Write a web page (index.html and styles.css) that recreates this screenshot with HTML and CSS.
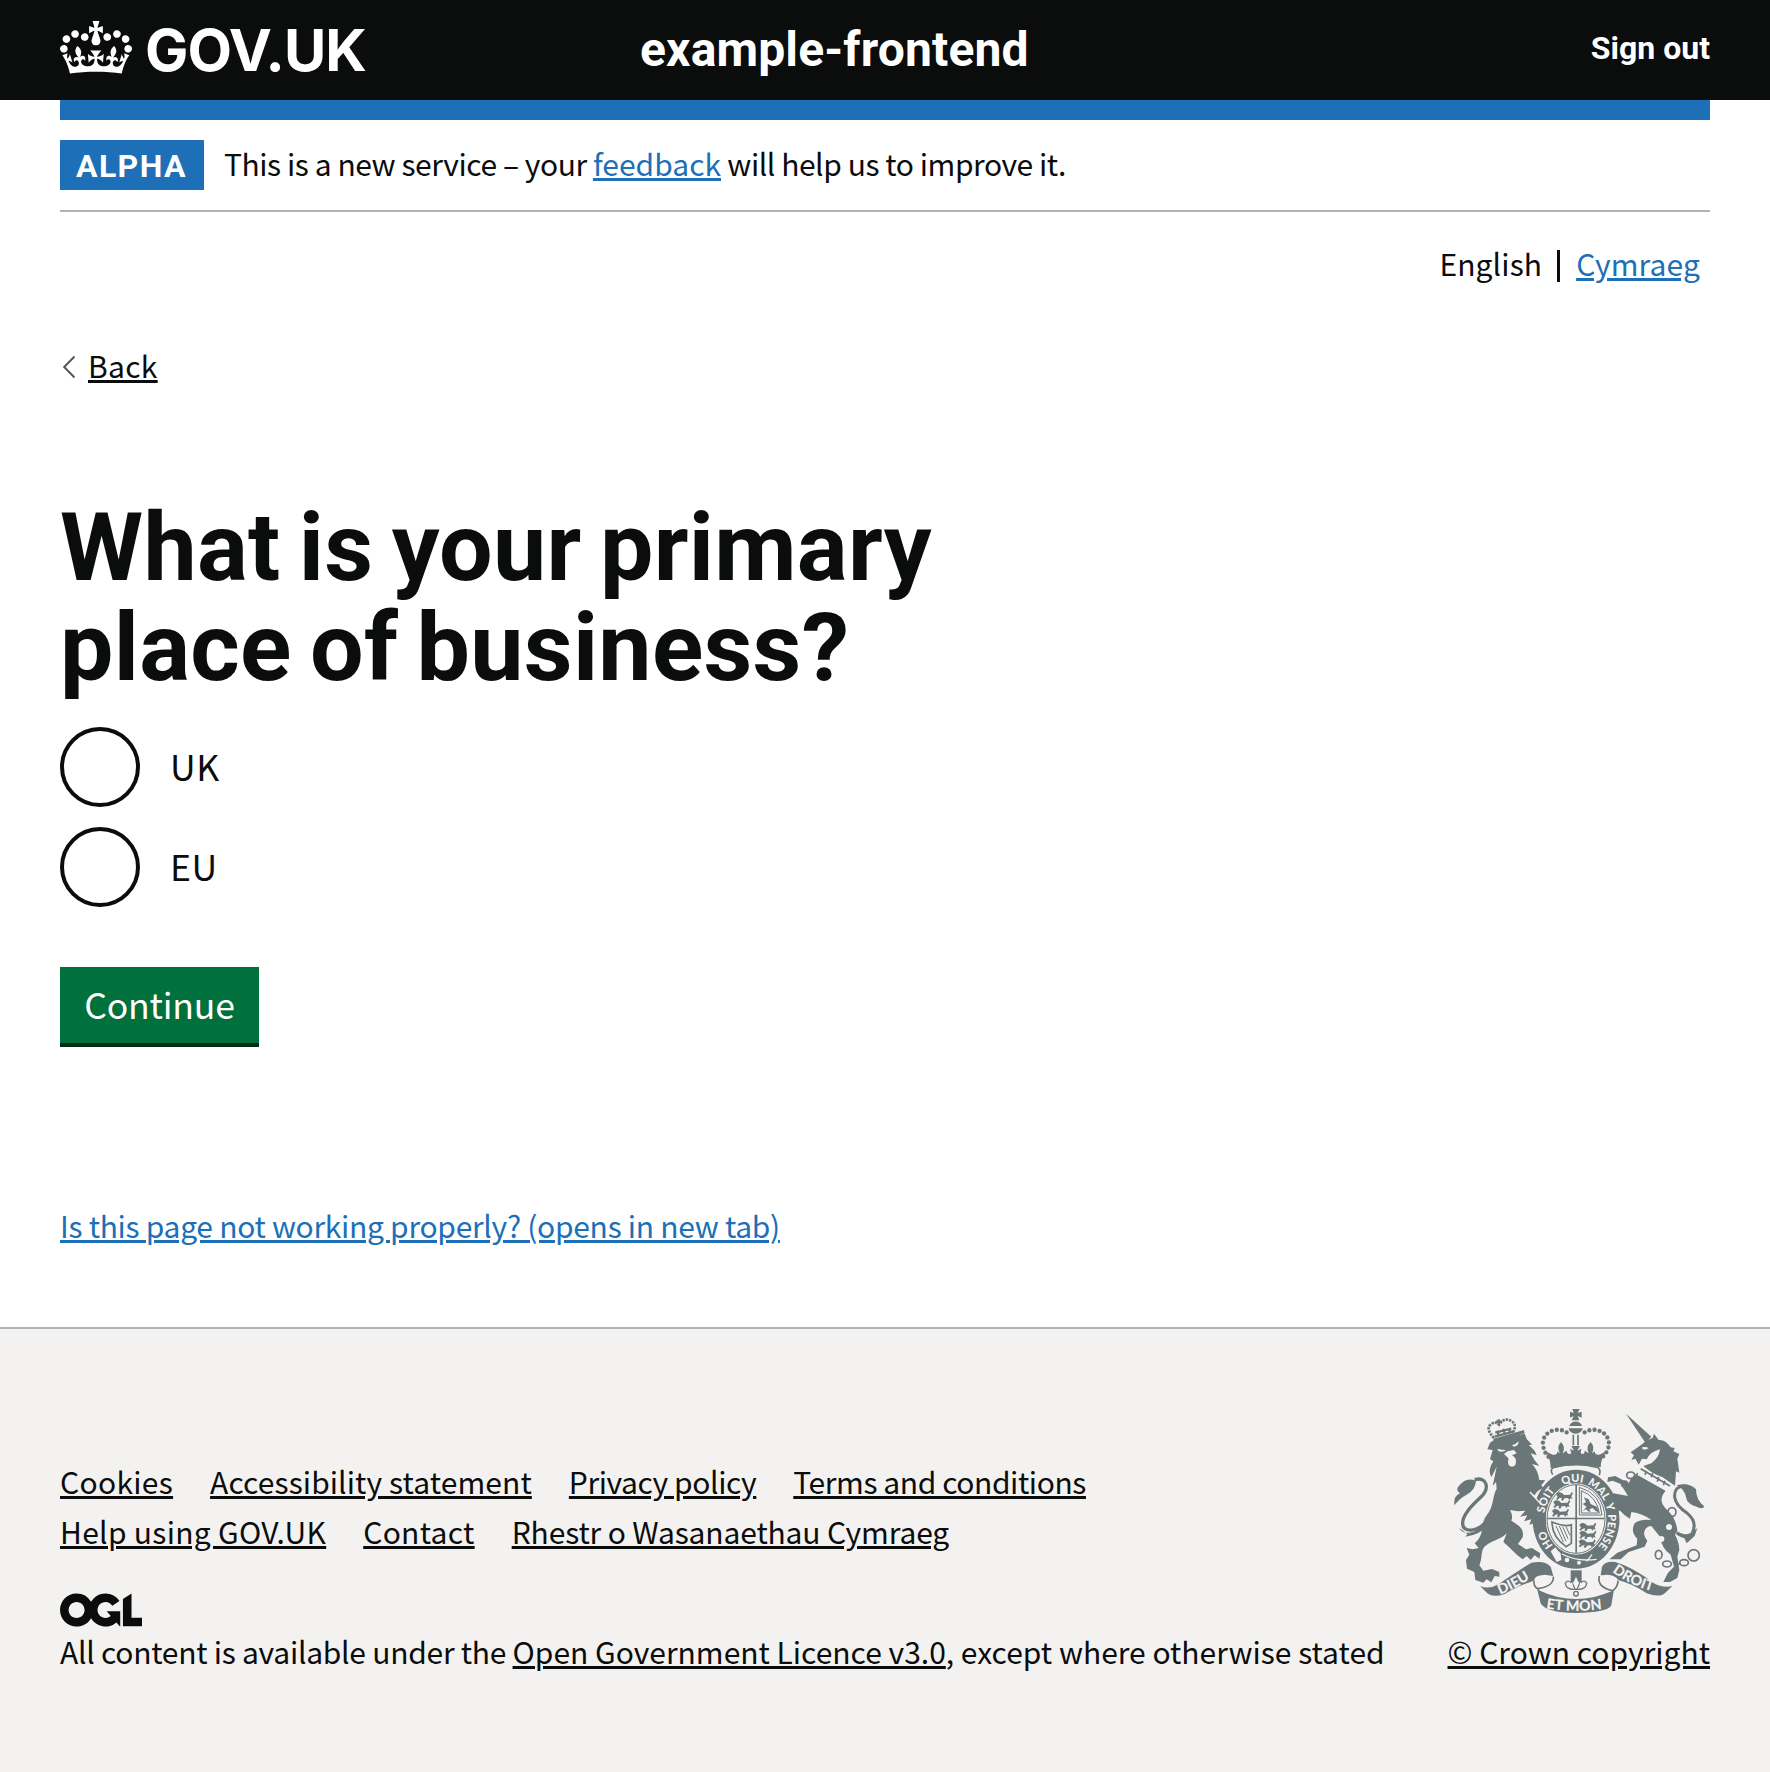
FILE: index.html
```html
<!DOCTYPE html>
<html lang="en">
<head>
<meta charset="utf-8">
<title>What is your primary place of business? - example-frontend - GOV.UK</title>
<link rel="stylesheet" href="styles.css">
</head>
<body>
<header class="header">
  <div class="header-inner">
    <div class="logo">
      <svg class="crown" viewBox="0 0 132 97" aria-hidden="true"><path fill="currentColor" fill-rule="evenodd" d="M25 30.2c3.5 1.5 7.7-.2 9.1-3.7 1.5-3.6-.2-7.8-3.9-9.2-3.6-1.4-7.6.3-9.1 3.9-1.4 3.5.3 7.5 3.9 9zM9 39.5c3.6 1.5 7.8-.2 9.2-3.7 1.5-3.6-.2-7.8-3.9-9.1-3.6-1.5-7.6.2-9.1 3.8-1.4 3.5.3 7.5 3.8 9zM4.4 57.2c3.5 1.5 7.7-.2 9.1-3.8 1.5-3.6-.2-7.7-3.9-9.1-3.5-1.5-7.6.3-9.1 3.8-1.4 3.5.3 7.6 3.9 9.1zm38.3-21.4c3.5 1.5 7.7-.2 9.1-3.8 1.5-3.6-.2-7.7-3.9-9.1-3.6-1.5-7.6.3-9.1 3.8-1.3 3.6.4 7.7 3.9 9.1zm64.4-5.6c-3.6 1.5-7.8-.2-9.1-3.7-1.5-3.6.2-7.8 3.8-9.2 3.6-1.4 7.7.3 9.2 3.9 1.3 3.5-.4 7.5-3.9 9zm15.9 9.3c-3.6 1.5-7.7-.2-9.1-3.7-1.5-3.6.2-7.8 3.7-9.1 3.6-1.5 7.7.2 9.2 3.8 1.5 3.5-.3 7.5-3.8 9zm4.7 17.7c-3.6 1.5-7.8-.2-9.2-3.8-1.5-3.6.2-7.7 3.9-9.1 3.6-1.5 7.7.3 9.2 3.8 1.3 3.5-.4 7.6-3.9 9.1zM89.3 35.8c-3.6 1.5-7.8-.2-9.2-3.8-1.4-3.6.2-7.7 3.9-9.1 3.6-1.5 7.7.3 9.2 3.8 1.4 3.6-.3 7.7-3.9 9.1zM69.7 17.7l8.9 4.7V9.3l-8.9 2.8c-.2-.3-.5-.6-.9-.9L72.4 0H59.6l3.5 11.2c-.3.3-.6.5-.9.9l-8.8-2.8v13.1l8.8-4.7c.3.3.6.7.9.9l-5 15.4v.1c-.2.8-.4 1.6-.4 2.4 0 4.1 3.1 7.5 7 8.1h.2c.3 0 .7.1 1 .1.4 0 .7 0 1-.1h.2c4-.6 7.1-4.1 7.1-8.1 0-.8-.1-1.7-.4-2.4V34l-5.1-15.4c.4-.2.7-.6 1-.9zM66 92.8c16.9 0 32.8 1.1 47.1 3.2 4-16.9 8.9-26.7 14-33.5l-9.6-3.4c1 4.9 1.1 7.2 0 10.2-1.5-1.4-3-4.3-4.2-8.7L108.6 76c2.8-2 5-3.2 7.5-3.3-4.4 9.4-10 11.9-13.6 11.2-4.3-.8-6.3-4.6-5.6-7.9 1-4.7 5.7-5.9 8-.5 4.3-8.7-3-11.4-7.6-8.8 7.1-7.2 7.9-13.5 2.1-21.1-8 6.1-8.1 12.3-4.5 20.8-4.7-5.4-12.1-2.5-9.5 6.2 3.4-5.2 7.9-2 7.2 3.1-.6 4.3-6.4 7.8-13.5 7.2-10.3-.9-10.9-8-11.2-13.8 2.5-.5 7.1 1.8 11 7.3L80.2 60c-4.1 4.4-8 5.3-12.3 5.4 1.4-4.4 8-11.6 8-11.6H55.5s6.4 7.2 7.9 11.6c-4.2-.1-8-1-12.3-5.4l1.4 16.4c3.9-5.5 8.5-7.7 10.9-7.3-.3 5.8-.9 12.8-11.1 13.8-7.2.6-12.9-2.9-13.5-7.2-.7-5 3.8-8.3 7.1-3.1 2.7-8.7-4.6-11.6-9.4-6.2 3.7-8.5 3.6-14.7-4.6-20.8-5.8 7.6-5 13.9 2.2 21.1-4.7-2.6-11.9.1-7.7 8.8 2.3-5.5 7.1-4.2 8.1.5.7 3.3-1.3 7.1-5.7 7.9-3.5.7-9-1.8-13.5-11.2 2.5.1 4.7 1.3 7.5 3.3l-4.7-15.4c-1.2 4.4-2.7 7.2-4.3 8.7-1.1-3-.9-5.3 0-10.2l-9.5 3.4c5 6.9 9.9 16.7 14 33.5 14.8-2.1 30.8-3.2 47.7-3.2z"/></svg>
      <span class="wordmark">GOV.UK</span>
    </div>
    <div class="service">example-frontend</div>
    <div class="signout">Sign out</div>
  </div>
</header>

<div class="container">
  <div class="bar"></div>
  <div class="phase">
    <strong class="tag">ALPHA</strong>
    <span class="phase-text">This is a new service – your <a class="link even" href="#">feedback</a> will help us to improve it.</span>
  </div>
  <nav class="lang"><span class="lang-current">English</span><a class="link" href="#">Cymraeg</a></nav>
  <div class="back">
    <svg class="chevron" viewBox="0 0 14 24" aria-hidden="true"><path d="M12.5 1.5 2.2 12l10.3 10.5" fill="none" stroke="#505a5f" stroke-width="2"/></svg>
    <a class="link dark wide" href="#">Back</a>
  </div>
  <main>
    <h1 class="title">What is your primary<br>place of business?</h1>
    <div class="radios">
      <label class="radio"><span class="dot"></span><span class="radio-text">UK</span></label>
      <label class="radio"><span class="dot"></span><span class="radio-text">EU</span></label>
    </div>
    <button class="button">Continue</button>
    <p class="report"><a class="link" href="#">Is this page not working properly? (opens in new tab)</a></p>
  </main>
</div>

<footer class="footer">
  <div class="footer-inner">
    <div class="meta">
      <div class="links"><a class="link dark wide" href="#">Cookies</a><a class="link dark open" href="#">Accessibility statement</a><a class="link dark tight" href="#">Privacy policy</a><a class="link dark tight" href="#">Terms and conditions</a></div>
      <div class="links"><a class="link dark wide" href="#">Help using GOV.UK</a><a class="link dark wide" href="#">Contact</a><a class="link dark snug" href="#">Rhestr o Wasanaethau Cymraeg</a></div>
      <svg class="ogl" viewBox="0 0 483.2 195.7" aria-hidden="true"><path fill="currentColor" d="M421.5 142.8V.1l-50.7 32.3v161.1h112.4v-50.7zm-122.3-9.6A47.12 47.12 0 0 1 221 97.8c0-26 21.1-47.1 47.1-47.1 16.7 0 31.4 8.7 39.7 21.8l42.7-27.2A97.63 97.63 0 0 0 268.1 0c-36.5 0-68.3 20.1-85.1 49.7A98 98 0 0 0 97.8 0C43.9 0 0 43.9 0 97.8s43.9 97.8 97.8 97.8c36.5 0 68.3-20.1 85.1-49.7a97.76 97.76 0 0 0 149.6 25.4l19.4 22.2h3v-87.8h-80l24.3 27.5zM97.8 145c-26 0-47.1-21.1-47.1-47.1s21.1-47.1 47.1-47.1 47.1 21.1 47.1 47.1S123.8 145 97.8 145"/></svg>
      <p class="licence">All content is available under the <a class="link dark even" href="#">Open Government Licence v3.0</a><span class="even">, except where otherwise stated</span></p>
    </div>
    <div class="copyright">
      <svg class="arms" viewBox="69 54 756 618" aria-hidden="true">
        <defs>
          <path id="garter" d="M438 500A96 112 0 0 1 438 276A96 112 0 0 1 438 500"/>
          <path id="lion-s" d="M0 6l8-6 10 3 6 6 18-1 6-8 3 4-5 9 3 8-6-2-3 5-5-6-10 1-4 7-6-2 3-7-9 2-4 5-5-3 5-6-3-5z"/>
          <path id="dieu" d="M210 614Q262 594 322 552"/>
          <path id="droit" d="M546 546Q606 590 682 608"/>
          <path id="etmon" d="M348 655Q437 670 530 655"/>
        </defs>
        <g class="ink">
          <!-- lion -->
          <path d="M192 150L284 131 290 147 306 164 296 166Q314 178 320 196L302 190Q312 212 328 228L306 222Q324 240 328 270L346 271 334 286 340 294Q322 300 314 316L298 306 334 344 346 374 349 404 340 398 334 416 325 404 314 414 312 400 298 404 304 388 282 394 292 376 270 380 286 362 264 364 240 360Q250 378 244 392C262 404 284 414 278 442L264 462 288 478 306 474 331 490 328 506 314 496 302 510 290 498 278 508 262 496 236 470 220 456 230 430C216 446 190 452 174 462 148 476 160 500 148 526L160 542 186 537 208 546 208 560 194 558 184 577 170 568 160 578 136 570 133 546 111 536 108 510 118 494 110 474 128 478 146 474 134 460C166 434 150 400 170 376 192 350 186 320 200 296L198 276 188 288 200 230 184 262Q172 240 190 214L180 208 188 180 172 178 180 158Z"/>
          <path d="M73 346Q70 318 90 310 72 300 92 282 112 262 138 272 136 300 110 314 92 322 73 346Z"/>
          <path class="line" stroke-width="10" d="M134 269C172 258 180 296 152 322 124 348 96 376 98 402 100 430 142 424 166 398"/>
          <path d="M88 414Q94 430 118 428 142 426 168 396L184 398Q150 436 106 440L112 432Z"/>
          <path d="M190 146L282 120 284 130 192 158Z"/>
          <path class="line" stroke-width="8" stroke-dasharray="7 3" d="M192 144Q166 116 182 104 196 92 207 104 222 82 242 92 262 102 250 126"/>
          <path class="line" stroke-width="7" d="M206 88V104M198 95H216M194 140L252 124M202 122L206 136M220 116L224 132M238 114L240 128M196 128L244 116"/>
          <!-- unicorn -->
          <path d="M588 71L664 140 646 158Z"/>
          <path d="M602 187L634 164 652 150 668 144 672 131 686 150Q706 148 722 172L734 174 730 184 748 192 742 206 748 248 738 244 735 287 698 262Q668 252 640 228L664 220Q688 202 690 178 662 184 650 208L636 206 626 224 616 206 604 210 612 196Z"/>
          <path d="M622 248L706 304Q682 330 708 356 738 382 742 422L735 434Q748 458 748 480L742 500 748 540 742 564 720 576 700 576 714 548 732 530 722 494Q694 474 690 440L664 408Q650 408 644 422 638 434 652 452L644 470 596 486 572 508 538 508 562 488 620 466 622 446Q600 426 614 400 630 386 664 390 638 370 604 366L600 386 584 376 572 364 556 356 546 328 550 310 594 318 572 282 548 272 532 276 534 262 556 258 596 280 604 264Z"/>
          <path d="M740 286Q776 276 798 298 798 330 822 348 822 360 800 350 772 344 768 322 764 298 740 286Z"/>
          <path class="line" stroke-width="9" d="M770 289Q732 284 734 322 738 348 772 370 804 396 786 432 770 450 740 428"/>
          <path d="M740 424Q770 446 802 414L794 438 770 460 764 446Z"/>
          <path class="band" d="M632 236L718 288 706 304 622 256Z"/>
          <path class="line" stroke-width="5" d="M632 236L720 288M622 258L704 304M645 254l4-12M664 262l4-14M682 275l4-14M700 286l5-14"/>
          <g class="line chain">
            <ellipse cx="602" cy="256" rx="12" ry="10"/><ellipse cx="594" cy="341" rx="14" ry="14"/><ellipse cx="584" cy="282" rx="9" ry="9"/><ellipse cx="726" cy="366" rx="12" ry="13"/><ellipse cx="686" cy="494" rx="10" ry="13"/><ellipse cx="711" cy="522" rx="13" ry="9"/><ellipse cx="762" cy="518" rx="13" ry="9"/><circle cx="791" cy="496" r="17"/><path d="M740 524l12-4"/>
          </g>
          <!-- crown -->
          <path d="M427 57h22l-6 12 12-4v18l-12-5 5 13h-23l6-13-11 5v-18l11 4z"/>
          <path d="M418 108a20 20 0 0 1 38 0zM416 115h42a21 16 0 0 1-42 0z"/>
          <path class="line beads" d="M410 127C378 106 330 130 340 170Q344 192 360 204M464 127C496 106 544 130 536 170Q530 192 514 204"/>
          <path class="line" stroke-width="5" d="M430 134v32M444 134v32"/>
          <path d="M346 184L368 194Q384 196 382 184L390 190Q378 172 393 156 408 172 398 190L410 182Q412 196 424 190L420 176 432 182 424 168H450L442 182 454 176 452 190Q464 196 464 182L476 190Q466 172 482 156 496 172 486 190L494 184Q494 196 508 194L530 184Q512 206 512 232 437 218 362 234 362 206 346 184Z"/>
          <path class="line" stroke-width="5" d="M372 232Q437 214 502 232 514 238 508 256M372 232Q358 238 368 254"/>
          <!-- garter -->
          <path fill-rule="evenodd" d="M438 239A130 148 0 0 1 438 536A130 148 0 0 1 438 239ZM438 280A91 107 0 0 0 438 494A91 107 0 0 0 438 280Z"/>
          <ellipse class="line" stroke-width="3" cx="438" cy="387" rx="87" ry="103"/>
          <path d="M436 284h5v204h-5zM352 383h172v5H352z"/>
          <use href="#lion-s" x="378" y="306"/><use href="#lion-s" x="370" y="330"/><use href="#lion-s" x="366" y="356"/>
          <use href="#lion-s" x="448" y="398"/><use href="#lion-s" x="448" y="422"/><use href="#lion-s" x="446" y="448"/>
          <path class="line" stroke-width="3" d="M448 292V375H516Q512 310 448 292ZM454 302V369H508Q500 320 454 302Z"/>
          <path d="M458 364l12-14-12-8 10-6-6-14 14 6 6 14 18 8 8 18-12-6-8-8-10 4 4 8-8-2-6-6z"/>
          <path class="line" stroke-width="5" d="M366 396Q366 440 408 470L424 460V404Q406 412 366 396Z"/>
          <path class="line" stroke-width="3" d="M378 408L400 456M388 408L408 454M398 410L414 446M408 410L420 436"/>
          <!-- ribbon -->
          <path d="M150 588Q178 600 206 582 268 540 304 518 346 510 362 530L370 558 344 554Q312 556 312 572 260 588 224 612 190 624 172 610Z"/>
          <path d="M727 588Q690 596 664 574 604 530 556 516 526 512 516 530L512 556 534 554Q560 558 564 570 610 582 650 610 690 624 706 608Z"/>
          <path d="M330 602Q437 652 548 602L552 598 544 646Q534 668 437 669 346 668 332 640L320 592Z"/>
          <path class="line" stroke-width="5" d="M312 572Q310 588 322 596 372 590 370 560M564 572Q564 590 548 602 500 592 508 558"/>
          <path d="M422 541h33v36h-33z"/>
          <path class="line" stroke-width="4" d="M438 556Q422 578 436 598 408 600 406 580 412 568 424 578M438 556Q456 578 440 598 468 600 470 580 464 568 452 578M422 598H454"/>
          <circle class="line" stroke-width="4" cx="438" cy="611" r="7"/>
        </g>
        <g class="paper">
          <path d="M346 556Q330 566 344 578 356 566 364 562ZM532 556Q548 566 534 578 520 570 514 560Z"/>
          <path d="M202 176q12 4 26 4-8 8-22 4zM246 166q10-2 20-12 0 14-14 16zM222 192l10-8 20-4 8 10-14 6q12 6 12 18 0 16-12 16t-12-16q4-8-2-12z"/>
          <path d="M636 172q12-2 20 2-8 6-18 4z"/>
          <path d="M362 484l14-12 8 10 8 8 2 20-14 6z"/>
          <circle cx="411" cy="510" r="7"/><circle cx="447" cy="518" r="6"/><ellipse cx="717" cy="411" rx="9" ry="9"/><ellipse cx="694" cy="447" rx="9" ry="9"/>
          <path d="M438 560l9 20-9 16-9-16z"/>
          <path class="gap" d="M396 492Q440 516 500 508M486 494L470 514M300 306L334 344"/>
        </g>
        <g class="motto">
          <text><textPath href="#garter" startOffset="78">HO</textPath></text>
          <text><textPath href="#garter" startOffset="182">SOIT</textPath></text>
          <text><textPath href="#garter" startOffset="286">QUI</textPath></text>
          <text><textPath href="#garter" startOffset="362">MAL</textPath></text>
          <text><textPath href="#garter" startOffset="444">Y</textPath></text>
          <text><textPath href="#garter" startOffset="476">PENSE</textPath></text>
          <text class="big"><textPath href="#dieu">DIEU</textPath></text>
          <text class="big"><textPath href="#droit">DROIT</textPath></text>
          <text class="big"><textPath href="#etmon">ET MON</textPath></text>
        </g>
      </svg>
      <a class="link dark even" href="#">© Crown copyright</a>
    </div>
  </div>
</footer>
</body>
</html>
```
FILE: styles.css
```css
* { box-sizing: border-box; }
body {
  margin: 0;
  color: #0b0c0c;
  background: #fff;
  font: 30px/40px "Noto Sans CJK JP", "Liberation Sans", sans-serif;
}
p, h1 { margin: 0; }
.link { color: #1d70b8; text-decoration: underline; text-decoration-thickness: 3px; text-underline-offset: 2px; }
.dark { color: #0b0c0c; }
.even { letter-spacing: 0; }
.open { letter-spacing: .1px; }
.wide { letter-spacing: .3px; }
.tight { letter-spacing: -.42px; }
.snug { letter-spacing: -.14px; }

.header { height: 100px; background: #0b0c0c; color: #fff; font-family: Roboto, "Liberation Sans", sans-serif; font-weight: 700; }
.header-inner { display: grid; grid-template-columns: 580px 1fr auto; align-items: center; height: 100px; margin: 0 60px; }
.logo { display: flex; align-items: center; gap: 13px; }
.crown { width: 72px; height: 53px; margin-top: -5px; }
.wordmark { font-family: Inter, "Liberation Sans", sans-serif; font-size: 57.8px; line-height: 64px; letter-spacing: -.9px; }
.service { font-size: 48px; line-height: 50px; letter-spacing: .15px; }
.signout { font-size: 32px; padding-bottom: 4px; }

.container { margin: 0 60px; }
.bar { height: 20px; background: #1d70b8; }
.phase { display: flex; gap: 20px; padding: 20px 0; border-bottom: 2px solid #b1b4b6; }
.tag { width: 144px; height: 50px; padding-left: 16px; background: #1d70b8; color: #fff; font: 700 32px/52px Roboto, "Liberation Sans", sans-serif; letter-spacing: 1.4px; }
.phase-text { line-height: 46px; letter-spacing: -.44px; }
.lang { display: flex; justify-content: flex-end; padding: 31px 10px 0 0; letter-spacing: .12px; }
.lang-current { padding-right: 18px; margin-right: 16px; background: linear-gradient(#0b0c0c, #0b0c0c) right 7px / 3px 32px no-repeat; }
.back { display: flex; align-items: center; gap: 12px; padding: 62px 0 0 2px; }
.chevron { width: 14px; height: 24px; margin-top: 4px; }

.title { margin-top: 113px; font: 700 95px/100px Roboto, "Liberation Sans", sans-serif; letter-spacing: .3px; word-spacing: -5.6px; }
.radios { display: flex; flex-direction: column; gap: 20px; margin-top: 29px; font-size: 35.6px; }
.radio { display: flex; align-items: center; gap: 30px; height: 80px; letter-spacing: .5px; }
.radio-text { line-height: 60px; padding-bottom: 2px; }
.dot { width: 80px; height: 80px; border: 4px solid #0b0c0c; border-radius: 50%; }
.button {
  display: block; width: 199px; height: 80px; margin-top: 60px; padding: 0 0 2px;
  border: 0; border-bottom: 4px solid #002d18; background: #00703c; color: #fff;
  font: 35.6px/60px "Noto Sans CJK JP", "Liberation Sans", sans-serif; letter-spacing: -.2px;
}
.report { margin-top: 158px; letter-spacing: -.29px; }

.footer { height: 445px; margin-top: 82px; border-top: 2px solid #b1b4b6; background: #f3f2f1; }
.footer-inner { display: flex; justify-content: space-between; align-items: flex-end; height: 342px; margin: 0 60px; }
.links { display: flex; gap: 37px; line-height: 50px; }
.links .link { white-space: nowrap; }
.ogl { display: block; width: 82px; height: 34px; margin: 37px 0 4px; }
.licence { letter-spacing: -.26px; }
.copyright { display: flex; flex-direction: column; align-items: flex-end; }
.arms { width: 252px; height: 206px; margin: 0 5px 17px 0; }

.ink { fill: #6b7678; }
.line { fill: none; stroke: #6b7678; }
.chain { stroke-width: 5; }
.beads { stroke-width: 13; stroke-linecap: round; stroke-dasharray: 0 15.5; }
.paper, .band { fill: #f3f2f1; }
.gap { fill: none; stroke: #f3f2f1; stroke-width: 4; }
.motto { fill: #f3f2f1; font: 900 33px Lato, sans-serif; }
.big { font-size: 43px; }
```
